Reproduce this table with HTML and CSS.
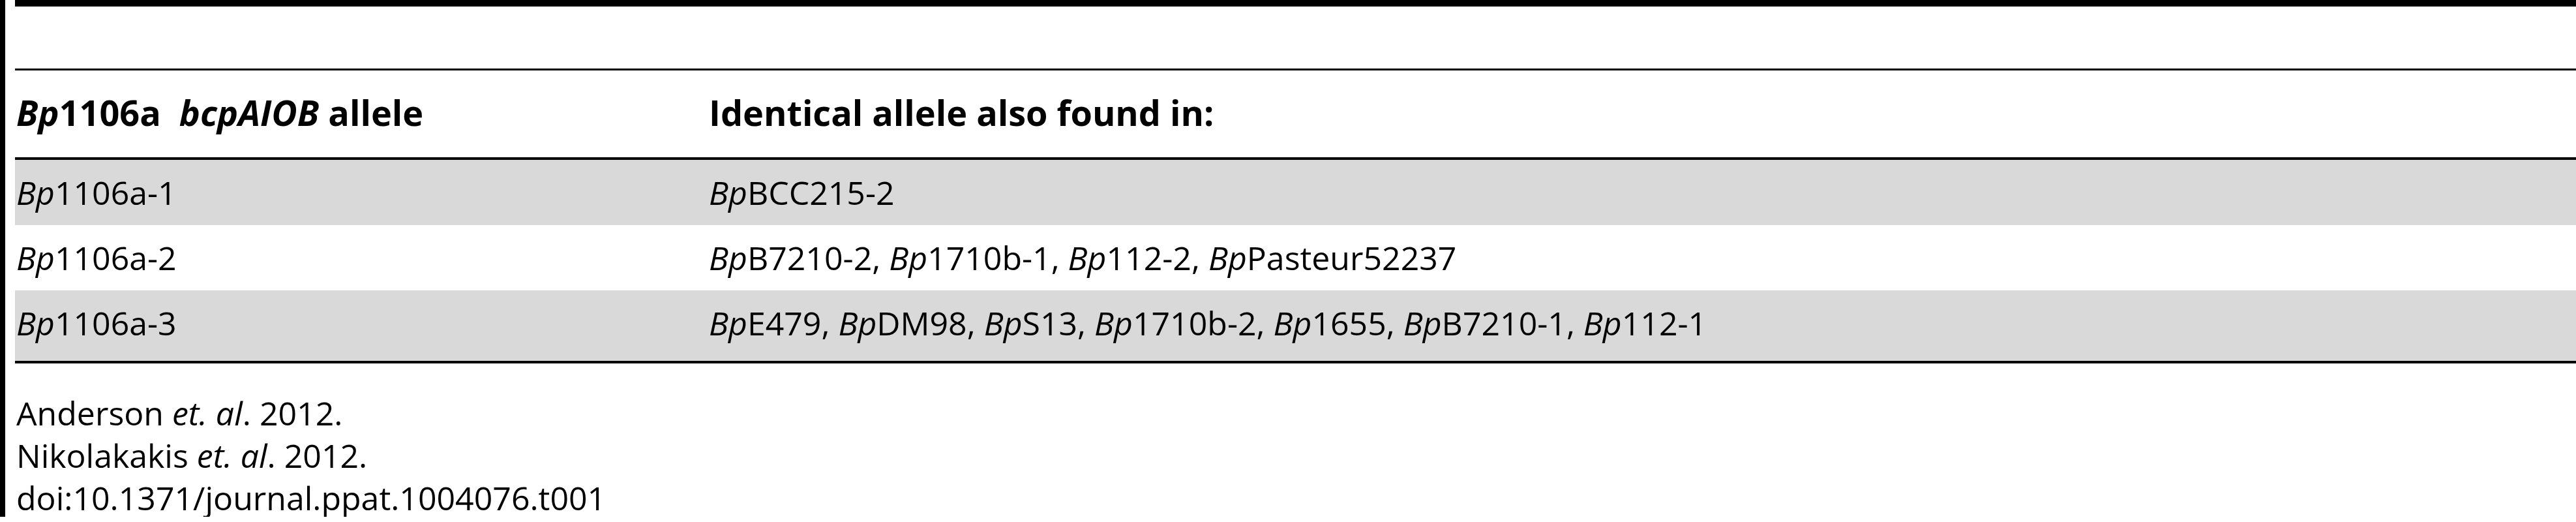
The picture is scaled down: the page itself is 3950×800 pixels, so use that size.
FILE: index.html
```html
<!DOCTYPE html>
<html>
<head>
<meta charset="utf-8">
<link rel="stylesheet" href="styles.css">
</head>
<body>
<div class="frame">
  <div class="table">
    <div class="row head">
      <div class="cell"><i>Bp</i>1106a&nbsp; <i>bcpAIOB</i> allele</div>
      <div class="cell">Identical allele also found in:</div>
    </div>
    <div class="row shade">
      <div class="cell"><i>Bp</i>1106a-1</div>
      <div class="cell"><i>Bp</i>BCC215-2</div>
    </div>
    <div class="row">
      <div class="cell"><i>Bp</i>1106a-2</div>
      <div class="cell"><i>Bp</i>B7210-2, <i>Bp</i>1710b-1, <i>Bp</i>112-2, <i>Bp</i>Pasteur52237</div>
    </div>
    <div class="row shade last">
      <div class="cell"><i>Bp</i>1106a-3</div>
      <div class="cell"><i>Bp</i>E479, <i>Bp</i>DM98, <i>Bp</i>S13, <i>Bp</i>1710b-2, <i>Bp</i>1655, <i>Bp</i>B7210-1, <i>Bp</i>112-1</div>
    </div>
  </div>
  <div class="notes">
    <div class="note">Anderson <i>et. al</i>. 2012.</div>
    <div class="note">Nikolakakis <i>et. al</i>. 2012.</div>
    <div class="note">doi:10.1371/journal.ppat.1004076.t001</div>
  </div>
</div>
</body>
</html>
```
FILE: styles.css
```css
html, body {
  margin: 0;
  padding: 0;
  background: #fff;
}
body {
  font-family: "Open Sans", "DejaVu Sans", sans-serif;
  font-size: 50px;
  color: #000;
}
.frame {
  box-sizing: border-box;
  height: 792px;
  border-left: 8px solid #000;
  padding-left: 15px;
}
.table {
  border-top: 10px solid #000;
  padding-top: 95px;
}
.row {
  display: grid;
  grid-template-columns: 1062px 1fr;
  line-height: 68px;
  padding: 16px 0;
}
.cell {
  padding-left: 2px;
  white-space: nowrap;
}
.head {
  border-top: 3px solid #000;
  border-bottom: 4px solid #000;
  padding: 30px 0 35px;
  font-size: 54px;
  font-weight: 700;
}
.shade {
  background: #d9d9d9;
}
.last {
  padding-bottom: 24px;
  border-bottom: 4px solid #000;
}
.notes {
  margin-top: 44px;
  line-height: 65px;
  padding-left: 2px;
}
```
